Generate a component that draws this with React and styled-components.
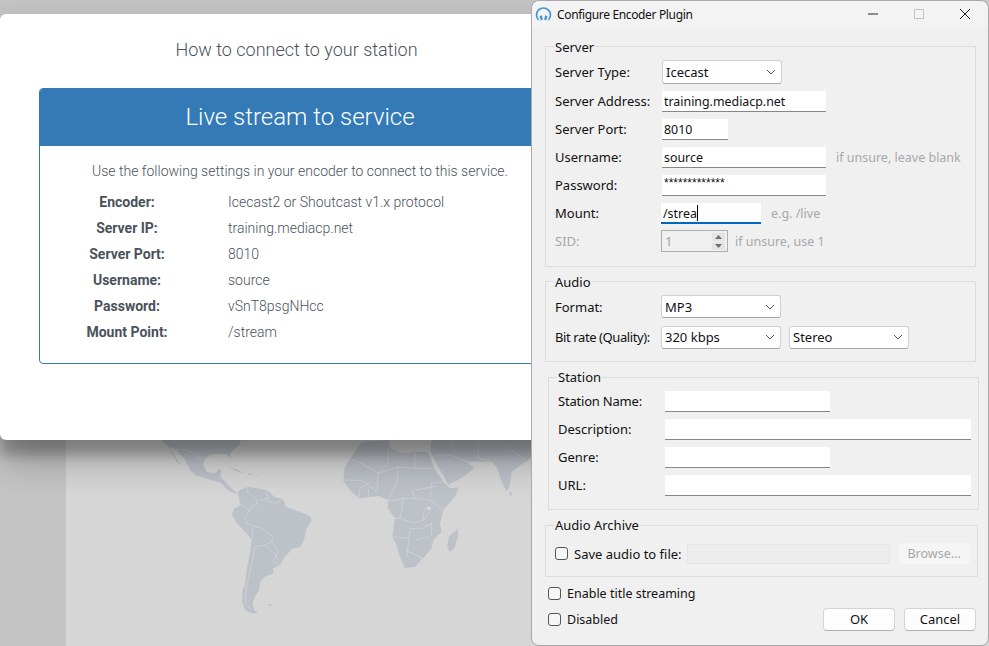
import React from 'react';
import styled, { createGlobalStyle } from 'styled-components';

const GlobalStyle = createGlobalStyle`
  html, body { margin: 0; padding: 0; height: 100%; overflow: hidden; }
  body { font-family: "Roboto", "Liberation Sans", sans-serif; }
`;

const winFont = `"Noto Sans", "Open Sans", "Liberation Sans", sans-serif`;

const Desktop = styled.div`
  position: relative;
  width: 989px;
  height: 646px;
  overflow: hidden;
  padding-top: 14px;
  box-sizing: border-box;
  background:
    linear-gradient(#c5c5c5 14px, transparent 14px),
    linear-gradient(to right, #c5c5c5 66px, #d6d6d6 66px);
`;

const MapArt = styled.svg`
  position: absolute;
  left: 0;
  top: 440px;
  width: 540px;
  height: 206px;
`;

const Modal = styled.div`
  position: relative;
  width: 600px;
  height: 426px;
  box-sizing: border-box;
  padding: 24px 39px 0;
  background: #fff;
  border-radius: 6px;
  box-shadow: 0 19px 38px rgba(0, 0, 0, 0.3), 0 15px 12px rgba(0, 0, 0, 0.22);
`;

const ModalTitle = styled.h4`
  margin: 0 0 26px -7px;
  height: 24px;
  font-size: 18px;
  line-height: 24px;
  font-weight: 300;
  color: #4a525c;
  text-align: center;
`;

const Card = styled.div`
  height: 276px;
  box-sizing: border-box;
  border: 1px solid #337ab7;
  border-radius: 4px;
  overflow: hidden;
`;

const CardHead = styled.div`
  height: 57px;
  background: #337ab7;
  color: #fff;
  font-size: 24px;
  font-weight: 300;
  line-height: 57px;
  text-align: center;
`;

const CardIntro = styled.p`
  margin: 15px 0 8px;
  font-size: 14px;
  line-height: 20px;
  font-weight: 300;
  color: #4a525c;
  text-align: center;
`;

const InfoRow = styled.div`
  display: grid;
  grid-template-columns: 174px 1fr;
  height: 26px;
  align-items: center;
  font-size: 14px;
  color: #4a525c;
`;

const InfoLabel = styled.div`
  font-weight: 700;
  text-align: center;
`;

const InfoValue = styled.div`
  font-weight: 300;
  padding-left: 14px;
`;

const Dialog = styled.div`
  position: absolute;
  left: 531px;
  top: 0;
  width: 458px;
  height: 646px;
  box-sizing: border-box;
  background: #f0f0f0;
  border: 1px solid #a9a9a9;
  border-radius: 8px;
  font-family: ${winFont};
  font-size: 13px;
  color: #111;
`;

const TitleBar = styled.div`
  display: flex;
  align-items: center;
  height: 26px;
  padding-left: 3px;
  background: #f3f3f3;
  border-radius: 8px 8px 0 0;
  font-size: 12px;
  letter-spacing: -0.35px;
`;

const TitleText = styled.span`
  margin-left: 5px;
  flex: 1;
`;

const WinButton = styled.div`
  width: 46px;
  height: 26px;
  display: flex;
  align-items: center;
  justify-content: center;
`;

const GroupBox = styled.div`
  position: relative;
  box-sizing: border-box;
  margin: ${p => p.$top}px 0 0 ${p => p.$left}px;
  width: ${p => p.$width}px;
  height: ${p => p.$height}px;
  padding: ${p => p.$padTop}px 0 0 9px;
  border: 1px solid #dcdcdc;
`;

const Legend = styled.span`
  position: absolute;
  left: 8px;
  top: ${p => p.$top || -9}px;
  padding: 0 1px;
  line-height: 16px;
  background: #f0f0f0;
`;

const FormRow = styled.div`
  display: flex;
  align-items: center;
  height: ${p => p.$height || 28}px;
`;

const Label = styled.div`
  width: ${p => p.$width || 107}px;
  flex: none;
  white-space: nowrap;
  letter-spacing: ${p => p.$tight || 0}px;
  color: ${p => (p.$disabled ? '#a8a8a8' : '#111')};
`;

const Field = styled.div`
  width: ${p => p.$width}px;
  height: 21px;
  box-sizing: border-box;
  margin-left: ${p => (p.$focus ? -1 : 0)}px;
  padding-left: 2px;
  background: #fff;
  border-bottom: ${p => (p.$focus ? '2px solid #0067c0' : '1px solid #868686')};
  font-size: 12.4px;
  line-height: 21px;
  white-space: nowrap;
`;

const MaskedText = styled.span`
  display: block;
  font-family: "Liberation Sans", sans-serif;
  font-size: 12px;
  line-height: 16px;
`;

const Caret = styled.span`
  display: inline-block;
  width: 1px;
  height: 16px;
  background: #000;
  vertical-align: -3px;
`;

const Hint = styled.span`
  margin-left: ${p => p.$gap || 10}px;
  color: #a8a8a8;
  font-size: 12.5px;
  white-space: nowrap;
`;

const SelectBox = styled.div`
  display: flex;
  align-items: center;
  justify-content: space-between;
  width: 120px;
  height: ${p => p.$height || 23}px;
  box-sizing: border-box;
  margin-right: ${p => p.$gap || 0}px;
  padding: 0 5px 0 3px;
  background: #fff;
  border: 1px solid #d0d0d0;
  border-bottom-color: #a8a8a8;
  border-radius: 3px;
`;

const Spinner = styled.div`
  display: flex;
  align-items: center;
  justify-content: space-between;
  width: 67px;
  height: 22px;
  box-sizing: border-box;
  margin-left: -1px;
  padding: 0 2px 0 3px;
  border: 1px solid #adadad;
  color: #a0a0a0;
`;

const SpinArrows = styled.div`
  display: flex;
  flex-direction: column;
  gap: 1px;
`;

const SpinArrow = styled.div`
  width: 13px;
  height: 8px;
  display: flex;
  align-items: center;
  justify-content: center;
  background: #e4e4e4;
`;

const CheckRow = styled.label`
  display: flex;
  align-items: center;
  gap: 6px;
  height: 26px;
`;

const CheckBox = styled.span`
  display: block;
  width: 13px;
  height: 13px;
  box-sizing: border-box;
  background: #f6f6f6;
  border: 1px solid #555;
  border-radius: 3px;
`;

const ArchiveField = styled.div`
  width: 203px;
  height: 20px;
  box-sizing: border-box;
  margin: 0 9px 0 5px;
  background: #ececec;
  border: 1px solid #e6e6e6;
`;

const BrowseButton = styled.div`
  width: 71px;
  height: 21px;
  background: #f5f5f5;
  border-radius: 3px;
  color: #a8a8a8;
  font-size: 12.5px;
  line-height: 21px;
  text-align: center;
`;

const Footer = styled.div`
  display: flex;
  justify-content: space-between;
  align-items: flex-end;
  margin: 3px 12px 0 16px;
`;

const FooterChecks = styled.div`
  font-size: 12.5px;
`;

const Buttons = styled.div`
  display: flex;
  gap: 9px;
  margin-bottom: 1px;
`;

const DialogButton = styled.div`
  width: 72px;
  height: 23px;
  box-sizing: border-box;
  background: #fdfdfd;
  border: 1px solid #d4d4d4;
  border-bottom-color: #b0b0b0;
  border-radius: 4px;
  line-height: 21px;
  text-align: center;
`;

const Chevron = () => (
  <svg width="10" height="6" viewBox="0 0 10 6" fill="none" stroke="#555" strokeWidth="1">
    <path d="M1 1l4 4 4-4" />
  </svg>
);

const AppIcon = () => (
  <svg width="17" height="17" viewBox="0 0 17 17" fill="none">
    <path d="M3.2 13.5A7 7 0 1 1 13.8 13.5" stroke="#3f94d6" strokeWidth="1.6" strokeLinecap="round" />
    <path d="M4.5 10.2l2.2-1 1.2 4.3-2 1z" fill="#3f94d6" />
    <path d="M12.5 10.2l-2.2-1-1.2 4.3 2 1z" fill="#3f94d6" />
  </svg>
);

const SpinGlyph = ({ d }) => (
  <svg width="7" height="4" viewBox="0 0 7 4"><path d={d} fill="#707070" /></svg>
);

const WorldMap = () => (
  <MapArt viewBox="0 440 540 206">
    <g transform="translate(150 440) scale(.3333)">
      <g fill="#bdc1c8">
        <path d="M35 0L272 0L270 12L250 30L240 45L250 65L240 50L225 42L190 42L165 55L160 75L170 95L195 100L205 88L215 90L210 105L222 120L235 135L250 150L262 160L250 158L232 150L215 130L190 122L165 115L135 105L120 90L105 60L80 30L60 25Z" />
        <path d="M60 25L75 50L95 78L80 65L65 40Z" />
        <path d="M235 80L260 88L282 100L262 95Z" />
        <path d="M292 98L310 102L296 105Z" />
        <path d="M320 105L328 106L322 108Z" />
        <path d="M262 160L270 150L295 140L320 145L350 150L375 172L400 178L408 200L440 212L480 228L485 240L470 265L462 300L450 320L425 328L405 350L390 375L370 385L370 400L345 410L330 425L328 450L315 470L308 490L312 510L325 518L305 520L285 510L276 485L278 450L285 435L290 390L300 340L305 300L285 275L260 250L246 225L252 205L270 195L268 175Z" />
        <path d="M352 494L365 492L362 497L354 497Z" />
      </g>
      <g fill="none" stroke="#dcdee2" strokeWidth="2" opacity="0.8">
        <path d="M60 25L110 30L130 40L155 60" />
        <path d="M205 110L232 125" />
        <path d="M295 140L290 155L318 175L320 195L300 205L285 235L290 250L310 258L335 265L350 275L368 290L365 305L385 335L378 350L390 365" />
        <path d="M252 205L275 195L300 215" />
        <path d="M305 300L310 258" />
        <path d="M315 320L345 315L365 305" />
        <path d="M315 320L305 370L290 435L285 490L305 510" />
        <path d="M368 365L390 375" />
        <path d="M345 315L360 330L380 345L370 365" />
        <path d="M350 150L355 185L375 190L400 178" />
        <path d="M330 180L355 175" />
      </g>
    </g>
    <g transform="translate(335 440) scale(.3333)">
      <g fill="#bdc1c8">
        <path d="M80 5L160 0L165 25L205 40L240 35L280 35L300 90L325 125L345 145L372 142L360 170L325 210L315 250L320 275L295 300L290 325L265 355L240 380L210 385L195 350L182 310L172 290L180 235L158 205L158 180L130 168L100 172L72 175L50 155L25 125L28 85L50 50Z" />
        <path d="M290 0L590 0L590 55L565 70L530 95L525 135L515 155L500 125L485 80L470 65L430 65L395 65L418 85L385 110L340 135L330 115L300 65L285 35Z" />
        <path d="M525 152L533 162L528 168L523 162Z" />
        <path d="M368 266L370 285L358 325L345 335L336 322L342 290Z" />
      </g>
      <g fill="none" stroke="#dcdee2" strokeWidth="2" opacity="0.8">
        <path d="M160 25L160 65L130 100L80 70L50 60" />
        <path d="M240 35L240 85L190 80L130 100L125 155" />
        <path d="M240 85L302 85" />
        <path d="M190 80L185 130L155 185L205 175L245 175" />
        <path d="M25 120L80 122L125 155" />
        <path d="M70 175L75 145L110 125" />
        <path d="M100 172L100 145" />
        <path d="M230 150L240 175L285 180L325 210" />
        <path d="M285 180L290 130L325 125" />
        <path d="M240 150L300 140" />
        <path d="M205 175L195 235L235 250L265 240L290 210" />
        <path d="M270 205L262 240" />
        <path d="M175 235L195 235" />
        <path d="M172 290L222 295L225 265L262 265L290 250" />
        <path d="M222 295L215 350" />
        <path d="M240 300L285 290" />
        <path d="M290 250L290 285" />
        <path d="M265 355L210 330" />
        <path d="M300 45L350 45L395 65" />
        <path d="M345 0L360 40" />
        <path d="M430 0L430 55L470 65" />
        <path d="M500 10L570 60" />
        <path d="M285 35L300 65L335 130" />
        <circle cx="281" cy="205" r="5" fill="#dcdee2" />
        <circle cx="258" cy="358" r="4" />
      </g>
    </g>
  </MapArt>
);

const infoRows = [
  ['Encoder:', 'Icecast2 or Shoutcast v1.x protocol'],
  ['Server IP:', 'training.mediacp.net'],
  ['Server Port:', '8010'],
  ['Username:', 'source'],
  ['Password:', 'vSnT8psgNHcc'],
  ['Mount Point:', '/stream'],
];

export default function App() {
  return (
    <Desktop>
      <GlobalStyle />
      <WorldMap />
      <Modal>
        <ModalTitle>How to connect to your station</ModalTitle>
        <Card>
          <CardHead>Live stream to service</CardHead>
          <CardIntro>Use the following settings in your encoder to connect to this service.</CardIntro>
          {infoRows.map(([label, value]) => (
            <InfoRow key={label}>
              <InfoLabel>{label}</InfoLabel>
              <InfoValue>{value}</InfoValue>
            </InfoRow>
          ))}
        </Card>
      </Modal>
      <Dialog>
        <TitleBar>
          <AppIcon />
          <TitleText>Configure Encoder Plugin</TitleText>
          <WinButton>
            <svg width="10" height="10" viewBox="0 0 10 10"><path d="M0 5h10" stroke="#222" /></svg>
          </WinButton>
          <WinButton>
            <svg width="10" height="10" viewBox="0 0 10 10"><rect x=".5" y=".5" width="9" height="9" fill="none" stroke="#c4c4c4" /></svg>
          </WinButton>
          <WinButton>
            <svg width="12" height="12" viewBox="0 0 12 12"><path d="M1 1l10 10M11 1L1 11" stroke="#222" /></svg>
          </WinButton>
        </TitleBar>
        <GroupBox $top={19} $left={13} $width={431} $height={221} $padTop={10}>
          <Legend $top={-8}>Server</Legend>
          <FormRow $height={30}><Label>Server Type:</Label><SelectBox $height={24}>Icecast<Chevron /></SelectBox></FormRow>
          <FormRow><Label>Server Address:</Label><Field $width={164}>training.mediacp.net</Field></FormRow>
          <FormRow><Label>Server Port:</Label><Field $width={66}>8010</Field></FormRow>
          <FormRow><Label>Username:</Label><Field $width={164}>source</Field><Hint>if unsure, leave blank</Hint></FormRow>
          <FormRow><Label>Password:</Label><Field $width={164}><MaskedText>*************</MaskedText></Field></FormRow>
          <FormRow><Label>Mount:</Label><Field $width={100} $focus>/strea<Caret /></Field><Hint>e.g. /live</Hint></FormRow>
          <FormRow>
            <Label $disabled>SID:</Label>
            <Spinner>
              1
              <SpinArrows>
                <SpinArrow><SpinGlyph d="M3.5 0L7 4H0z" /></SpinArrow>
                <SpinArrow><SpinGlyph d="M0 0h7L3.5 4z" /></SpinArrow>
              </SpinArrows>
            </Spinner>
            <Hint $gap={7}>if unsure, use 1</Hint>
          </FormRow>
        </GroupBox>
        <GroupBox $top={14} $left={13} $width={431} $height={81} $padTop={13}>
          <Legend $top={-8}>Audio</Legend>
          <FormRow $height={23}><Label $width={106}>Format:</Label><SelectBox>MP3<Chevron /></SelectBox></FormRow>
          <FormRow $height={38}>
            <Label $width={106} $tight={-0.4}>Bit rate (Quality):</Label>
            <SelectBox $gap={8}>320 kbps<Chevron /></SelectBox>
            <SelectBox>Stereo<Chevron /></SelectBox>
          </FormRow>
        </GroupBox>
        <GroupBox $top={15} $left={16} $width={431} $height={133} $padTop={9}>
          <Legend>Station</Legend>
          <FormRow><Label $tight={-0.2}>Station Name:</Label><Field $width={165} /></FormRow>
          <FormRow><Label>Description:</Label><Field $width={306} /></FormRow>
          <FormRow><Label>Genre:</Label><Field $width={165} /></FormRow>
          <FormRow><Label>URL:</Label><Field $width={306} /></FormRow>
        </GroupBox>
        <GroupBox $top={15} $left={13} $width={433} $height={52} $padTop={17}>
          <Legend>Audio Archive</Legend>
          <FormRow $height={21}>
            <CheckRow><CheckBox />Save audio to file:</CheckRow>
            <ArchiveField />
            <BrowseButton>Browse...</BrowseButton>
          </FormRow>
        </GroupBox>
        <Footer>
          <FooterChecks>
            <CheckRow><CheckBox />Enable title streaming</CheckRow>
            <CheckRow><CheckBox />Disabled</CheckRow>
          </FooterChecks>
          <Buttons>
            <DialogButton>OK</DialogButton>
            <DialogButton>Cancel</DialogButton>
          </Buttons>
        </Footer>
      </Dialog>
    </Desktop>
  );
}
